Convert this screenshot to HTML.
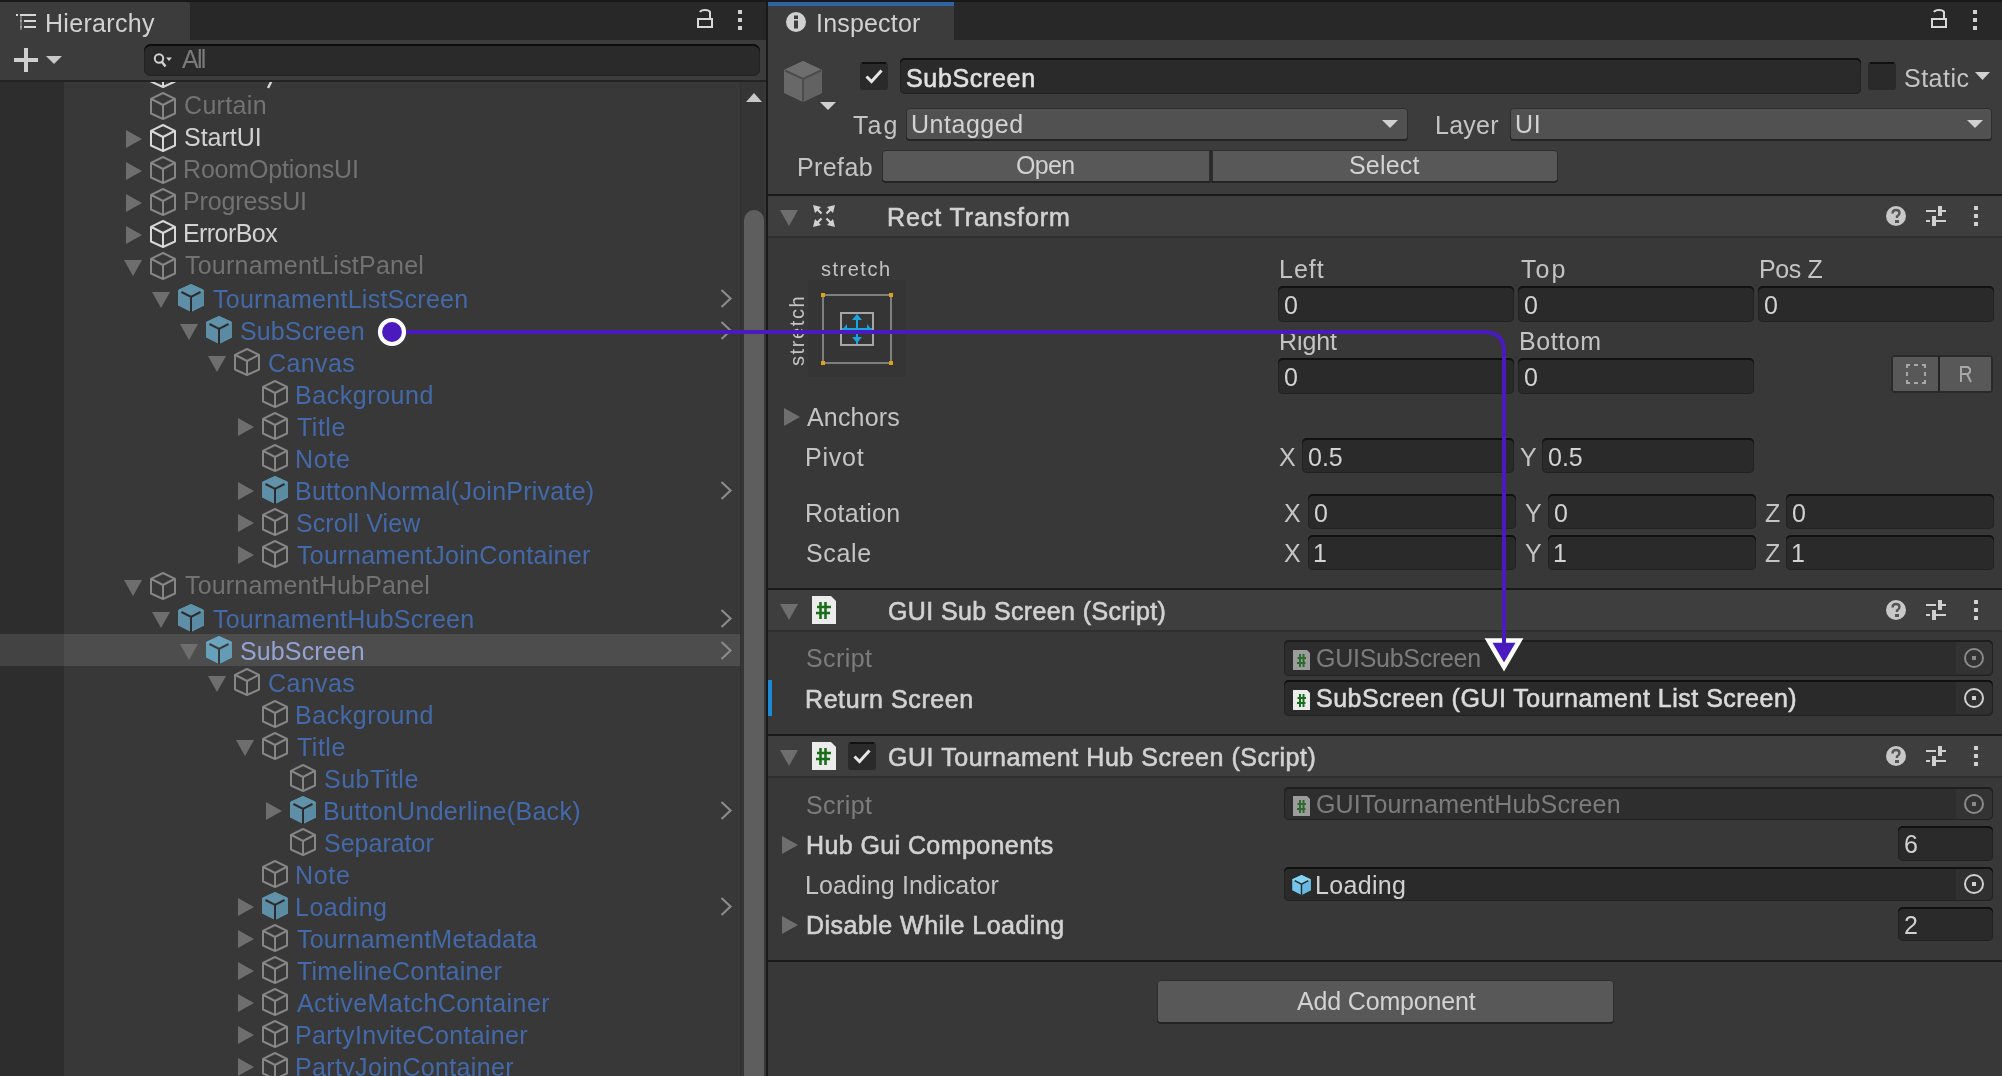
<!DOCTYPE html>
<html><head><meta charset="utf-8"><style>
html,body{margin:0;padding:0;width:2002px;height:1076px;overflow:hidden;background:#383838}
body *{position:absolute}
svg{overflow:visible}
svg *{position:static}
.t{white-space:pre;font-family:'Liberation Sans', sans-serif;will-change:transform}
</style></head><body>
<div style="left:0px;top:0px;width:2002px;height:1076px;background:#383838;"></div>
<div style="left:0px;top:0px;width:2002px;height:2px;background:#191919;"></div>
<div style="left:0px;top:2px;width:766px;height:38px;background:#282828;"></div>
<div style="left:0px;top:2px;width:190px;height:38px;background:#3c3c3c;border-top-right-radius:3px;"></div>
<svg style="left:14px;top:12px;" width="24" height="20" viewBox="0 0 24 20"><path d="M6 3 H22 M10 9 H22 M10 15 H22" stroke="#d8d8d8" stroke-width="2"/><rect x="2" y="2" width="2" height="2" fill="#d8d8d8"/><rect x="6" y="8" width="2" height="2" fill="#d8d8d8"/><rect x="6" y="14" width="2" height="2" fill="#d8d8d8"/><path d="M7 4 V18" stroke="#8a8a8a" stroke-width="1.5"/></svg>
<div class="t" style="left:45.00px;top:8.96px;font-size:25px;line-height:28.750px;color:#d2d2d2;font-weight:normal;letter-spacing:0.312px;">Hierarchy</div>
<svg style="left:697px;top:8px;" width="18" height="22" viewBox="0 0 18 22"><rect x="1" y="11" width="14" height="8" fill="none" stroke="#d8d8d8" stroke-width="2"/><path d="M3 4 Q4 2 8 2 Q12 2 13 4 V10" fill="none" stroke="#d8d8d8" stroke-width="2"/></svg>
<svg style="left:738px;top:10px;" width="4" height="20" viewBox="0 0 4 20"><rect x="0" y="0" width="4" height="4" fill="#d0d0d0"/><rect x="0" y="8" width="4" height="4" fill="#d0d0d0"/><rect x="0" y="16" width="4" height="4" fill="#d0d0d0"/></svg>
<div style="left:0px;top:40px;width:766px;height:40px;background:#3c3c3c;"></div>
<svg style="left:14px;top:48px;" width="24" height="24" viewBox="0 0 24 24"><path d="M12 0 V24 M0 12 H24" stroke="#d0d0d0" stroke-width="4"/></svg>
<svg style="left:46px;top:56px;" width="16" height="8" viewBox="0 0 16 8"><path d="M0 0 L16 0 L8.0 8 Z" fill="#c8c8c8"/></svg>
<div style="left:144px;top:44px;width:616px;height:32px;background:#2a2a2a;border-radius:7px;box-shadow:inset 0 2px 0 #0c0c0c, inset 0 0 0 1px #222;"></div>
<svg style="left:153px;top:53px;" width="20" height="16" viewBox="0 0 20 16"><circle cx="6" cy="5.5" r="4.2" fill="none" stroke="#d0d0d0" stroke-width="2"/><path d="M9 9 L12.5 13.5" stroke="#d0d0d0" stroke-width="2.5"/><path d="M13 4.5 H19 L16 8 Z" fill="#d0d0d0"/></svg>
<div class="t" style="left:182.00px;top:44.96px;font-size:25px;line-height:28.750px;color:#7a7a7a;font-weight:normal;letter-spacing:-1.700px;">All</div>
<div style="left:0px;top:80px;width:766px;height:2px;background:#232323;"></div>
<div style="left:0;top:82px;width:740px;height:994px;overflow:hidden;background:#383838">
<div style="left:0px;top:-24px;width:64px;height:32px;background:#2d2d2d;"></div>
<svg style="left:150px;top:-22px;" width="26" height="28" viewBox="0 0 26 28"><path d="M13 1 L25 6.8 V21.5 L13 27 L1 21.5 V6.8 Z M1.5 7 L13 13 L24.5 7 M13 13 V27" fill="none" stroke="#d8d8d8" stroke-width="2" stroke-linejoin="round"/></svg>
<svg style="left:266px;top:-2px;" width="8" height="8" viewBox="0 0 8 8"><path d="M6 0 L2 8" stroke="#d8d8d8" stroke-width="2.4"/></svg>
<div style="left:0px;top:8px;width:64px;height:32px;background:#2d2d2d;"></div>
<svg style="left:150px;top:10px;" width="26" height="28" viewBox="0 0 26 28"><path d="M13 1 L25 6.8 V21.5 L13 27 L1 21.5 V6.8 Z M1.5 7 L13 13 L24.5 7 M13 13 V27" fill="none" stroke="#868686" stroke-width="2" stroke-linejoin="round"/></svg>
<div class="t" style="left:184.00px;top:8.96px;font-size:25px;line-height:28.750px;color:#727272;font-weight:normal;letter-spacing:0.333px;">Curtain</div>
<div style="left:0px;top:40px;width:64px;height:32px;background:#2d2d2d;"></div>
<svg style="left:126px;top:48px;" width="16" height="18" viewBox="0 0 16 18"><path d="M0 0 L16 9 L0 18 Z" fill="#6e6e6e"/></svg>
<svg style="left:150px;top:42px;" width="26" height="28" viewBox="0 0 26 28"><path d="M13 1 L25 6.8 V21.5 L13 27 L1 21.5 V6.8 Z M1.5 7 L13 13 L24.5 7 M13 13 V27" fill="none" stroke="#d8d8d8" stroke-width="2" stroke-linejoin="round"/></svg>
<div class="t" style="left:184.00px;top:40.96px;font-size:25px;line-height:28.750px;color:#d2d2d2;font-weight:normal;letter-spacing:0.000px;">StartUI</div>
<div style="left:0px;top:72px;width:64px;height:32px;background:#2d2d2d;"></div>
<svg style="left:126px;top:80px;" width="16" height="18" viewBox="0 0 16 18"><path d="M0 0 L16 9 L0 18 Z" fill="#6e6e6e"/></svg>
<svg style="left:150px;top:74px;" width="26" height="28" viewBox="0 0 26 28"><path d="M13 1 L25 6.8 V21.5 L13 27 L1 21.5 V6.8 Z M1.5 7 L13 13 L24.5 7 M13 13 V27" fill="none" stroke="#868686" stroke-width="2" stroke-linejoin="round"/></svg>
<div class="t" style="left:183.00px;top:72.96px;font-size:25px;line-height:28.750px;color:#727272;font-weight:normal;letter-spacing:-0.167px;">RoomOptionsUI</div>
<div style="left:0px;top:104px;width:64px;height:32px;background:#2d2d2d;"></div>
<svg style="left:126px;top:112px;" width="16" height="18" viewBox="0 0 16 18"><path d="M0 0 L16 9 L0 18 Z" fill="#6e6e6e"/></svg>
<svg style="left:150px;top:106px;" width="26" height="28" viewBox="0 0 26 28"><path d="M13 1 L25 6.8 V21.5 L13 27 L1 21.5 V6.8 Z M1.5 7 L13 13 L24.5 7 M13 13 V27" fill="none" stroke="#868686" stroke-width="2" stroke-linejoin="round"/></svg>
<div class="t" style="left:183.00px;top:104.96px;font-size:25px;line-height:28.750px;color:#727272;font-weight:normal;letter-spacing:-0.111px;">ProgressUI</div>
<div style="left:0px;top:136px;width:64px;height:32px;background:#2d2d2d;"></div>
<svg style="left:126px;top:144px;" width="16" height="18" viewBox="0 0 16 18"><path d="M0 0 L16 9 L0 18 Z" fill="#6e6e6e"/></svg>
<svg style="left:150px;top:138px;" width="26" height="28" viewBox="0 0 26 28"><path d="M13 1 L25 6.8 V21.5 L13 27 L1 21.5 V6.8 Z M1.5 7 L13 13 L24.5 7 M13 13 V27" fill="none" stroke="#d8d8d8" stroke-width="2" stroke-linejoin="round"/></svg>
<div class="t" style="left:183.00px;top:136.96px;font-size:25px;line-height:28.750px;color:#d2d2d2;font-weight:normal;letter-spacing:-0.571px;">ErrorBox</div>
<div style="left:0px;top:168px;width:64px;height:32px;background:#2d2d2d;"></div>
<svg style="left:124px;top:178px;" width="18" height="16" viewBox="0 0 18 16"><path d="M0 0 L18 0 L9 16 Z" fill="#6e6e6e"/></svg>
<svg style="left:150px;top:170px;" width="26" height="28" viewBox="0 0 26 28"><path d="M13 1 L25 6.8 V21.5 L13 27 L1 21.5 V6.8 Z M1.5 7 L13 13 L24.5 7 M13 13 V27" fill="none" stroke="#868686" stroke-width="2" stroke-linejoin="round"/></svg>
<div class="t" style="left:185.00px;top:168.96px;font-size:25px;line-height:28.750px;color:#727272;font-weight:normal;letter-spacing:0.222px;">TournamentListPanel</div>
<div style="left:0px;top:200px;width:64px;height:32px;background:#2d2d2d;"></div>
<svg style="left:152px;top:210px;" width="18" height="16" viewBox="0 0 18 16"><path d="M0 0 L18 0 L9 16 Z" fill="#6e6e6e"/></svg>
<svg style="left:178px;top:202px" width="26" height="28" viewBox="0 0 26 28"><path d="M13 0 L25 5.5 Q26 6 26 7 V21.5 L13 28 L0 21.5 V7 Q0 6 1 5.5 Z" fill="#5e8fa6"/><path d="M13 0 L25 5.5 Q26 6 26 7 L13 13 L0 7 Q0 6 1 5.5 Z" fill="#6092aa"/><path d="M26 7 L13 13 V28 L26 21.5 Z" fill="#5b8ba2"/><path d="M3.5 8 L13 12.8 L22.5 8 M13 12.8 V28" fill="none" stroke="#2b2b2b" stroke-width="2"/></svg>
<div class="t" style="left:213.00px;top:202.96px;font-size:25px;line-height:28.750px;color:#4369a9;font-weight:normal;letter-spacing:0.263px;">TournamentListScreen</div>
<svg style="left:720px;top:207px;" width="12" height="19" viewBox="0 0 12 19"><path d="M1.5 1 L10.5 9.5 L1.5 18" fill="none" stroke="#8a8a8a" stroke-width="2.2"/></svg>
<div style="left:0px;top:232px;width:64px;height:32px;background:#2d2d2d;"></div>
<svg style="left:180px;top:242px;" width="18" height="16" viewBox="0 0 18 16"><path d="M0 0 L18 0 L9 16 Z" fill="#6e6e6e"/></svg>
<svg style="left:206px;top:234px" width="26" height="28" viewBox="0 0 26 28"><path d="M13 0 L25 5.5 Q26 6 26 7 V21.5 L13 28 L0 21.5 V7 Q0 6 1 5.5 Z" fill="#5e8fa6"/><path d="M13 0 L25 5.5 Q26 6 26 7 L13 13 L0 7 Q0 6 1 5.5 Z" fill="#6092aa"/><path d="M26 7 L13 13 V28 L26 21.5 Z" fill="#5b8ba2"/><path d="M3.5 8 L13 12.8 L22.5 8 M13 12.8 V28" fill="none" stroke="#2b2b2b" stroke-width="2"/></svg>
<div class="t" style="left:240.00px;top:234.96px;font-size:25px;line-height:28.750px;color:#4369a9;font-weight:normal;letter-spacing:0.125px;">SubScreen</div>
<svg style="left:720px;top:239px;" width="12" height="19" viewBox="0 0 12 19"><path d="M1.5 1 L10.5 9.5 L1.5 18" fill="none" stroke="#8a8a8a" stroke-width="2.2"/></svg>
<div style="left:0px;top:264px;width:64px;height:32px;background:#2d2d2d;"></div>
<svg style="left:208px;top:274px;" width="18" height="16" viewBox="0 0 18 16"><path d="M0 0 L18 0 L9 16 Z" fill="#6e6e6e"/></svg>
<svg style="left:234px;top:266px;" width="26" height="28" viewBox="0 0 26 28"><path d="M13 1 L25 6.8 V21.5 L13 27 L1 21.5 V6.8 Z M1.5 7 L13 13 L24.5 7 M13 13 V27" fill="none" stroke="#868686" stroke-width="2" stroke-linejoin="round"/></svg>
<div class="t" style="left:268.00px;top:266.96px;font-size:25px;line-height:28.750px;color:#4369a9;font-weight:normal;letter-spacing:0.400px;">Canvas</div>
<div style="left:0px;top:296px;width:64px;height:32px;background:#2d2d2d;"></div>
<svg style="left:262px;top:298px;" width="26" height="28" viewBox="0 0 26 28"><path d="M13 1 L25 6.8 V21.5 L13 27 L1 21.5 V6.8 Z M1.5 7 L13 13 L24.5 7 M13 13 V27" fill="none" stroke="#868686" stroke-width="2" stroke-linejoin="round"/></svg>
<div class="t" style="left:295.00px;top:298.96px;font-size:25px;line-height:28.750px;color:#4369a9;font-weight:normal;letter-spacing:0.556px;">Background</div>
<div style="left:0px;top:328px;width:64px;height:32px;background:#2d2d2d;"></div>
<svg style="left:238px;top:336px;" width="16" height="18" viewBox="0 0 16 18"><path d="M0 0 L16 9 L0 18 Z" fill="#6e6e6e"/></svg>
<svg style="left:262px;top:330px;" width="26" height="28" viewBox="0 0 26 28"><path d="M13 1 L25 6.8 V21.5 L13 27 L1 21.5 V6.8 Z M1.5 7 L13 13 L24.5 7 M13 13 V27" fill="none" stroke="#868686" stroke-width="2" stroke-linejoin="round"/></svg>
<div class="t" style="left:297.00px;top:330.96px;font-size:25px;line-height:28.750px;color:#4369a9;font-weight:normal;letter-spacing:0.500px;">Title</div>
<div style="left:0px;top:360px;width:64px;height:32px;background:#2d2d2d;"></div>
<svg style="left:262px;top:362px;" width="26" height="28" viewBox="0 0 26 28"><path d="M13 1 L25 6.8 V21.5 L13 27 L1 21.5 V6.8 Z M1.5 7 L13 13 L24.5 7 M13 13 V27" fill="none" stroke="#868686" stroke-width="2" stroke-linejoin="round"/></svg>
<div class="t" style="left:295.00px;top:362.96px;font-size:25px;line-height:28.750px;color:#4369a9;font-weight:normal;letter-spacing:0.667px;">Note</div>
<div style="left:0px;top:392px;width:64px;height:32px;background:#2d2d2d;"></div>
<svg style="left:238px;top:400px;" width="16" height="18" viewBox="0 0 16 18"><path d="M0 0 L16 9 L0 18 Z" fill="#6e6e6e"/></svg>
<svg style="left:262px;top:394px" width="26" height="28" viewBox="0 0 26 28"><path d="M13 0 L25 5.5 Q26 6 26 7 V21.5 L13 28 L0 21.5 V7 Q0 6 1 5.5 Z" fill="#5e8fa6"/><path d="M13 0 L25 5.5 Q26 6 26 7 L13 13 L0 7 Q0 6 1 5.5 Z" fill="#6092aa"/><path d="M26 7 L13 13 V28 L26 21.5 Z" fill="#5b8ba2"/><path d="M3.5 8 L13 12.8 L22.5 8 M13 12.8 V28" fill="none" stroke="#2b2b2b" stroke-width="2"/></svg>
<div class="t" style="left:295.00px;top:394.96px;font-size:25px;line-height:28.750px;color:#4369a9;font-weight:normal;letter-spacing:0.250px;">ButtonNormal(JoinPrivate)</div>
<svg style="left:720px;top:399px;" width="12" height="19" viewBox="0 0 12 19"><path d="M1.5 1 L10.5 9.5 L1.5 18" fill="none" stroke="#8a8a8a" stroke-width="2.2"/></svg>
<div style="left:0px;top:424px;width:64px;height:32px;background:#2d2d2d;"></div>
<svg style="left:238px;top:432px;" width="16" height="18" viewBox="0 0 16 18"><path d="M0 0 L16 9 L0 18 Z" fill="#6e6e6e"/></svg>
<svg style="left:262px;top:426px;" width="26" height="28" viewBox="0 0 26 28"><path d="M13 1 L25 6.8 V21.5 L13 27 L1 21.5 V6.8 Z M1.5 7 L13 13 L24.5 7 M13 13 V27" fill="none" stroke="#868686" stroke-width="2" stroke-linejoin="round"/></svg>
<div class="t" style="left:296.00px;top:426.96px;font-size:25px;line-height:28.750px;color:#4369a9;font-weight:normal;letter-spacing:0.100px;">Scroll View</div>
<div style="left:0px;top:456px;width:64px;height:32px;background:#2d2d2d;"></div>
<svg style="left:238px;top:464px;" width="16" height="18" viewBox="0 0 16 18"><path d="M0 0 L16 9 L0 18 Z" fill="#6e6e6e"/></svg>
<svg style="left:262px;top:458px;" width="26" height="28" viewBox="0 0 26 28"><path d="M13 1 L25 6.8 V21.5 L13 27 L1 21.5 V6.8 Z M1.5 7 L13 13 L24.5 7 M13 13 V27" fill="none" stroke="#868686" stroke-width="2" stroke-linejoin="round"/></svg>
<div class="t" style="left:297.00px;top:458.96px;font-size:25px;line-height:28.750px;color:#4369a9;font-weight:normal;letter-spacing:0.318px;">TournamentJoinContainer</div>
<div style="left:0px;top:488px;width:64px;height:32px;background:#2d2d2d;"></div>
<svg style="left:124px;top:498px;" width="18" height="16" viewBox="0 0 18 16"><path d="M0 0 L18 0 L9 16 Z" fill="#6e6e6e"/></svg>
<svg style="left:150px;top:490px;" width="26" height="28" viewBox="0 0 26 28"><path d="M13 1 L25 6.8 V21.5 L13 27 L1 21.5 V6.8 Z M1.5 7 L13 13 L24.5 7 M13 13 V27" fill="none" stroke="#868686" stroke-width="2" stroke-linejoin="round"/></svg>
<div class="t" style="left:185.00px;top:488.96px;font-size:25px;line-height:28.750px;color:#727272;font-weight:normal;letter-spacing:0.176px;">TournamentHubPanel</div>
<div style="left:0px;top:520px;width:64px;height:32px;background:#2d2d2d;"></div>
<svg style="left:152px;top:530px;" width="18" height="16" viewBox="0 0 18 16"><path d="M0 0 L18 0 L9 16 Z" fill="#6e6e6e"/></svg>
<svg style="left:178px;top:522px" width="26" height="28" viewBox="0 0 26 28"><path d="M13 0 L25 5.5 Q26 6 26 7 V21.5 L13 28 L0 21.5 V7 Q0 6 1 5.5 Z" fill="#5e8fa6"/><path d="M13 0 L25 5.5 Q26 6 26 7 L13 13 L0 7 Q0 6 1 5.5 Z" fill="#6092aa"/><path d="M26 7 L13 13 V28 L26 21.5 Z" fill="#5b8ba2"/><path d="M3.5 8 L13 12.8 L22.5 8 M13 12.8 V28" fill="none" stroke="#2b2b2b" stroke-width="2"/></svg>
<div class="t" style="left:213.00px;top:522.96px;font-size:25px;line-height:28.750px;color:#4369a9;font-weight:normal;letter-spacing:0.222px;">TournamentHubScreen</div>
<svg style="left:720px;top:527px;" width="12" height="19" viewBox="0 0 12 19"><path d="M1.5 1 L10.5 9.5 L1.5 18" fill="none" stroke="#8a8a8a" stroke-width="2.2"/></svg>
<div style="left:0px;top:552px;width:64px;height:32px;background:#434343;"></div>
<div style="left:64px;top:552px;width:676px;height:32px;background:#4d4d4d;"></div>
<svg style="left:180px;top:562px;" width="18" height="16" viewBox="0 0 18 16"><path d="M0 0 L18 0 L9 16 Z" fill="#6e6e6e"/></svg>
<svg style="left:206px;top:554px" width="26" height="28" viewBox="0 0 26 28"><path d="M13 0 L25 5.5 Q26 6 26 7 V21.5 L13 28 L0 21.5 V7 Q0 6 1 5.5 Z" fill="#67a0b9"/><path d="M13 0 L25 5.5 Q26 6 26 7 L13 13 L0 7 Q0 6 1 5.5 Z" fill="#6aa4bd"/><path d="M26 7 L13 13 V28 L26 21.5 Z" fill="#649cb5"/><path d="M3.5 8 L13 12.8 L22.5 8 M13 12.8 V28" fill="none" stroke="#3a3a3a" stroke-width="2"/></svg>
<div class="t" style="left:240.00px;top:554.96px;font-size:25px;line-height:28.750px;color:#95a2d4;font-weight:normal;letter-spacing:0.125px;">SubScreen</div>
<svg style="left:720px;top:559px;" width="12" height="19" viewBox="0 0 12 19"><path d="M1.5 1 L10.5 9.5 L1.5 18" fill="none" stroke="#8a8a8a" stroke-width="2.2"/></svg>
<div style="left:0px;top:584px;width:64px;height:32px;background:#2d2d2d;"></div>
<svg style="left:208px;top:594px;" width="18" height="16" viewBox="0 0 18 16"><path d="M0 0 L18 0 L9 16 Z" fill="#6e6e6e"/></svg>
<svg style="left:234px;top:586px;" width="26" height="28" viewBox="0 0 26 28"><path d="M13 1 L25 6.8 V21.5 L13 27 L1 21.5 V6.8 Z M1.5 7 L13 13 L24.5 7 M13 13 V27" fill="none" stroke="#868686" stroke-width="2" stroke-linejoin="round"/></svg>
<div class="t" style="left:268.00px;top:586.96px;font-size:25px;line-height:28.750px;color:#4369a9;font-weight:normal;letter-spacing:0.400px;">Canvas</div>
<div style="left:0px;top:616px;width:64px;height:32px;background:#2d2d2d;"></div>
<svg style="left:262px;top:618px;" width="26" height="28" viewBox="0 0 26 28"><path d="M13 1 L25 6.8 V21.5 L13 27 L1 21.5 V6.8 Z M1.5 7 L13 13 L24.5 7 M13 13 V27" fill="none" stroke="#868686" stroke-width="2" stroke-linejoin="round"/></svg>
<div class="t" style="left:295.00px;top:618.96px;font-size:25px;line-height:28.750px;color:#4369a9;font-weight:normal;letter-spacing:0.556px;">Background</div>
<div style="left:0px;top:648px;width:64px;height:32px;background:#2d2d2d;"></div>
<svg style="left:236px;top:658px;" width="18" height="16" viewBox="0 0 18 16"><path d="M0 0 L18 0 L9 16 Z" fill="#6e6e6e"/></svg>
<svg style="left:262px;top:650px;" width="26" height="28" viewBox="0 0 26 28"><path d="M13 1 L25 6.8 V21.5 L13 27 L1 21.5 V6.8 Z M1.5 7 L13 13 L24.5 7 M13 13 V27" fill="none" stroke="#868686" stroke-width="2" stroke-linejoin="round"/></svg>
<div class="t" style="left:297.00px;top:650.96px;font-size:25px;line-height:28.750px;color:#4369a9;font-weight:normal;letter-spacing:0.500px;">Title</div>
<div style="left:0px;top:680px;width:64px;height:32px;background:#2d2d2d;"></div>
<svg style="left:290px;top:682px;" width="26" height="28" viewBox="0 0 26 28"><path d="M13 1 L25 6.8 V21.5 L13 27 L1 21.5 V6.8 Z M1.5 7 L13 13 L24.5 7 M13 13 V27" fill="none" stroke="#868686" stroke-width="2" stroke-linejoin="round"/></svg>
<div class="t" style="left:324.00px;top:682.96px;font-size:25px;line-height:28.750px;color:#4369a9;font-weight:normal;letter-spacing:0.500px;">SubTitle</div>
<div style="left:0px;top:712px;width:64px;height:32px;background:#2d2d2d;"></div>
<svg style="left:266px;top:720px;" width="16" height="18" viewBox="0 0 16 18"><path d="M0 0 L16 9 L0 18 Z" fill="#6e6e6e"/></svg>
<svg style="left:290px;top:714px" width="26" height="28" viewBox="0 0 26 28"><path d="M13 0 L25 5.5 Q26 6 26 7 V21.5 L13 28 L0 21.5 V7 Q0 6 1 5.5 Z" fill="#5e8fa6"/><path d="M13 0 L25 5.5 Q26 6 26 7 L13 13 L0 7 Q0 6 1 5.5 Z" fill="#6092aa"/><path d="M26 7 L13 13 V28 L26 21.5 Z" fill="#5b8ba2"/><path d="M3.5 8 L13 12.8 L22.5 8 M13 12.8 V28" fill="none" stroke="#2b2b2b" stroke-width="2"/></svg>
<div class="t" style="left:323.00px;top:714.96px;font-size:25px;line-height:28.750px;color:#4369a9;font-weight:normal;letter-spacing:0.300px;">ButtonUnderline(Back)</div>
<svg style="left:720px;top:719px;" width="12" height="19" viewBox="0 0 12 19"><path d="M1.5 1 L10.5 9.5 L1.5 18" fill="none" stroke="#8a8a8a" stroke-width="2.2"/></svg>
<div style="left:0px;top:744px;width:64px;height:32px;background:#2d2d2d;"></div>
<svg style="left:290px;top:746px;" width="26" height="28" viewBox="0 0 26 28"><path d="M13 1 L25 6.8 V21.5 L13 27 L1 21.5 V6.8 Z M1.5 7 L13 13 L24.5 7 M13 13 V27" fill="none" stroke="#868686" stroke-width="2" stroke-linejoin="round"/></svg>
<div class="t" style="left:324.00px;top:746.96px;font-size:25px;line-height:28.750px;color:#4369a9;font-weight:normal;letter-spacing:0.000px;">Separator</div>
<div style="left:0px;top:776px;width:64px;height:32px;background:#2d2d2d;"></div>
<svg style="left:262px;top:778px;" width="26" height="28" viewBox="0 0 26 28"><path d="M13 1 L25 6.8 V21.5 L13 27 L1 21.5 V6.8 Z M1.5 7 L13 13 L24.5 7 M13 13 V27" fill="none" stroke="#868686" stroke-width="2" stroke-linejoin="round"/></svg>
<div class="t" style="left:295.00px;top:778.96px;font-size:25px;line-height:28.750px;color:#4369a9;font-weight:normal;letter-spacing:0.667px;">Note</div>
<div style="left:0px;top:808px;width:64px;height:32px;background:#2d2d2d;"></div>
<svg style="left:238px;top:816px;" width="16" height="18" viewBox="0 0 16 18"><path d="M0 0 L16 9 L0 18 Z" fill="#6e6e6e"/></svg>
<svg style="left:262px;top:810px" width="26" height="28" viewBox="0 0 26 28"><path d="M13 0 L25 5.5 Q26 6 26 7 V21.5 L13 28 L0 21.5 V7 Q0 6 1 5.5 Z" fill="#5e8fa6"/><path d="M13 0 L25 5.5 Q26 6 26 7 L13 13 L0 7 Q0 6 1 5.5 Z" fill="#6092aa"/><path d="M26 7 L13 13 V28 L26 21.5 Z" fill="#5b8ba2"/><path d="M3.5 8 L13 12.8 L22.5 8 M13 12.8 V28" fill="none" stroke="#2b2b2b" stroke-width="2"/></svg>
<div class="t" style="left:295.00px;top:810.96px;font-size:25px;line-height:28.750px;color:#4369a9;font-weight:normal;letter-spacing:0.500px;">Loading</div>
<svg style="left:720px;top:815px;" width="12" height="19" viewBox="0 0 12 19"><path d="M1.5 1 L10.5 9.5 L1.5 18" fill="none" stroke="#8a8a8a" stroke-width="2.2"/></svg>
<div style="left:0px;top:840px;width:64px;height:32px;background:#2d2d2d;"></div>
<svg style="left:238px;top:848px;" width="16" height="18" viewBox="0 0 16 18"><path d="M0 0 L16 9 L0 18 Z" fill="#6e6e6e"/></svg>
<svg style="left:262px;top:842px;" width="26" height="28" viewBox="0 0 26 28"><path d="M13 1 L25 6.8 V21.5 L13 27 L1 21.5 V6.8 Z M1.5 7 L13 13 L24.5 7 M13 13 V27" fill="none" stroke="#868686" stroke-width="2" stroke-linejoin="round"/></svg>
<div class="t" style="left:297.00px;top:842.96px;font-size:25px;line-height:28.750px;color:#4369a9;font-weight:normal;letter-spacing:0.235px;">TournamentMetadata</div>
<div style="left:0px;top:872px;width:64px;height:32px;background:#2d2d2d;"></div>
<svg style="left:238px;top:880px;" width="16" height="18" viewBox="0 0 16 18"><path d="M0 0 L16 9 L0 18 Z" fill="#6e6e6e"/></svg>
<svg style="left:262px;top:874px;" width="26" height="28" viewBox="0 0 26 28"><path d="M13 1 L25 6.8 V21.5 L13 27 L1 21.5 V6.8 Z M1.5 7 L13 13 L24.5 7 M13 13 V27" fill="none" stroke="#868686" stroke-width="2" stroke-linejoin="round"/></svg>
<div class="t" style="left:297.00px;top:874.96px;font-size:25px;line-height:28.750px;color:#4369a9;font-weight:normal;letter-spacing:0.188px;">TimelineContainer</div>
<div style="left:0px;top:904px;width:64px;height:32px;background:#2d2d2d;"></div>
<svg style="left:238px;top:912px;" width="16" height="18" viewBox="0 0 16 18"><path d="M0 0 L16 9 L0 18 Z" fill="#6e6e6e"/></svg>
<svg style="left:262px;top:906px;" width="26" height="28" viewBox="0 0 26 28"><path d="M13 1 L25 6.8 V21.5 L13 27 L1 21.5 V6.8 Z M1.5 7 L13 13 L24.5 7 M13 13 V27" fill="none" stroke="#868686" stroke-width="2" stroke-linejoin="round"/></svg>
<div class="t" style="left:297.00px;top:906.96px;font-size:25px;line-height:28.750px;color:#4369a9;font-weight:normal;letter-spacing:0.421px;">ActiveMatchContainer</div>
<div style="left:0px;top:936px;width:64px;height:32px;background:#2d2d2d;"></div>
<svg style="left:238px;top:944px;" width="16" height="18" viewBox="0 0 16 18"><path d="M0 0 L16 9 L0 18 Z" fill="#6e6e6e"/></svg>
<svg style="left:262px;top:938px;" width="26" height="28" viewBox="0 0 26 28"><path d="M13 1 L25 6.8 V21.5 L13 27 L1 21.5 V6.8 Z M1.5 7 L13 13 L24.5 7 M13 13 V27" fill="none" stroke="#868686" stroke-width="2" stroke-linejoin="round"/></svg>
<div class="t" style="left:295.00px;top:938.96px;font-size:25px;line-height:28.750px;color:#4369a9;font-weight:normal;letter-spacing:0.316px;">PartyInviteContainer</div>
<div style="left:0px;top:968px;width:64px;height:32px;background:#2d2d2d;"></div>
<svg style="left:238px;top:976px;" width="16" height="18" viewBox="0 0 16 18"><path d="M0 0 L16 9 L0 18 Z" fill="#6e6e6e"/></svg>
<svg style="left:262px;top:970px;" width="26" height="28" viewBox="0 0 26 28"><path d="M13 1 L25 6.8 V21.5 L13 27 L1 21.5 V6.8 Z M1.5 7 L13 13 L24.5 7 M13 13 V27" fill="none" stroke="#868686" stroke-width="2" stroke-linejoin="round"/></svg>
<div class="t" style="left:295.00px;top:970.96px;font-size:25px;line-height:28.750px;color:#4369a9;font-weight:normal;letter-spacing:0.353px;">PartyJoinContainer</div>
</div>
<div style="left:740px;top:82px;width:1px;height:994px;background:#303030;"></div>
<div style="left:741px;top:82px;width:23px;height:994px;background:#353535;"></div>
<svg style="left:746px;top:93px;" width="16" height="9" viewBox="0 0 16 9"><path d="M0 9 L16 9 L8 0 Z" fill="#c8c8c8"/></svg>
<div style="left:744px;top:210px;width:20px;height:900px;background:#5e5e5e;border-radius:10px;"></div>
<div style="left:766px;top:0px;width:2px;height:1076px;background:#191919;"></div>
<div style="left:768px;top:2px;width:1234px;height:38px;background:#282828;"></div>
<div style="left:768px;top:2px;width:186px;height:38px;background:#3c3c3c;"></div>
<div style="left:768px;top:2px;width:186px;height:4px;background:#2e65a0;"></div>
<svg style="left:786px;top:12px;" width="20" height="20" viewBox="0 0 20 20"><circle cx="10" cy="10" r="10" fill="#d0d0d0"/><rect x="8" y="8.5" width="4" height="8" fill="#3c3c3c"/><rect x="8" y="3.5" width="4" height="3.5" fill="#3c3c3c"/></svg>
<div class="t" style="left:816.00px;top:8.96px;font-size:25px;line-height:28.750px;color:#d2d2d2;font-weight:normal;letter-spacing:0.188px;">Inspector</div>
<svg style="left:1931px;top:8px;" width="18" height="22" viewBox="0 0 18 22"><rect x="1" y="11" width="14" height="8" fill="none" stroke="#d8d8d8" stroke-width="2"/><path d="M3 4 Q4 2 8 2 Q12 2 13 4 V10" fill="none" stroke="#d8d8d8" stroke-width="2"/></svg>
<svg style="left:1973px;top:10px;" width="4" height="20" viewBox="0 0 4 20"><rect x="0" y="0" width="4" height="4" fill="#d0d0d0"/><rect x="0" y="8" width="4" height="4" fill="#d0d0d0"/><rect x="0" y="16" width="4" height="4" fill="#d0d0d0"/></svg>
<div style="left:768px;top:40px;width:1234px;height:154px;background:#3c3c3c;"></div>
<svg style="left:784px;top:61px;" width="38" height="41" viewBox="0 0 38 41"><path d="M19 0 L38 9 V32 L19 41 L0 32 V9 Z" fill="#686868"/><path d="M19 0 L38 9 L19 18 L0 9 Z" fill="#6e6e6e"/><path d="M38 9 L19 18 V41 L38 32 Z" fill="#626262"/><path d="M1 9.5 L19 18 L37 9.5 M19 18 V41" fill="none" stroke="#4c4c4c" stroke-width="2"/></svg>
<svg style="left:820px;top:102px;" width="16" height="8" viewBox="0 0 16 8"><path d="M0 0 L16 0 L8 8 Z" fill="#d0d0d0"/></svg>
<svg style="left:860px;top:62px;" width="28" height="28" viewBox="0 0 28 28"><rect x="0" y="0" width="28" height="28" rx="3" fill="#2a2a2a"/><rect x="2" y="0" width="24" height="2" fill="#101010"/><path d="M6.5 14.5 L11.5 19.5 L21.5 8.5" fill="none" stroke="#e6e6e6" stroke-width="3"/></svg>
<div style="left:900px;top:58px;width:961px;height:36px;background:#2a2a2a;border-radius:5px;box-shadow:inset 0 2px 0 #111111, inset 0 0 0 1px #222222;"></div>
<div class="t" style="left:906.00px;top:63.96px;font-size:25px;line-height:28.750px;color:#e0e0e0;font-weight:normal;letter-spacing:0.675px;-webkit-text-stroke:0.6px #e0e0e0;">SubScreen</div>
<svg style="left:1868px;top:62px;" width="28" height="28" viewBox="0 0 28 28"><rect x="0" y="0" width="28" height="28" rx="3" fill="#2a2a2a"/><rect x="2" y="0" width="24" height="2" fill="#101010"/></svg>
<div class="t" style="left:1904.00px;top:63.96px;font-size:25px;line-height:28.750px;color:#c4c4c4;font-weight:normal;letter-spacing:0.500px;">Static</div>
<svg style="left:1975px;top:72px;" width="15" height="8" viewBox="0 0 15 8"><path d="M0 0 L15 0 L7.5 8 Z" fill="#d0d0d0"/></svg>
<div class="t" style="left:853.00px;top:110.96px;font-size:25px;line-height:28.750px;color:#c4c4c4;font-weight:normal;letter-spacing:2.000px;">Tag</div>
<div style="left:906px;top:108px;width:502px;height:33px;background:#515151;border-radius:4px;box-shadow:inset 0 -2px 0 #242424, inset 0 0 0 1px #2e2e2e;"></div>
<div class="t" style="left:911.00px;top:109.96px;font-size:25px;line-height:28.750px;color:#d2d2d2;font-weight:normal;letter-spacing:0.529px;">Untagged</div>
<svg style="left:1382px;top:120px;" width="16" height="8" viewBox="0 0 16 8"><path d="M0 0 L16 0 L8 8 Z" fill="#d0d0d0"/></svg>
<div class="t" style="left:1435.00px;top:110.96px;font-size:25px;line-height:28.750px;color:#c4c4c4;font-weight:normal;letter-spacing:0.250px;">Layer</div>
<div style="left:1510px;top:108px;width:482px;height:33px;background:#515151;border-radius:4px;box-shadow:inset 0 -2px 0 #242424, inset 0 0 0 1px #2e2e2e;"></div>
<div class="t" style="left:1515.00px;top:109.96px;font-size:25px;line-height:28.750px;color:#d2d2d2;font-weight:normal;letter-spacing:0.600px;">UI</div>
<svg style="left:1967px;top:120px;" width="16" height="8" viewBox="0 0 16 8"><path d="M0 0 L16 0 L8 8 Z" fill="#d0d0d0"/></svg>
<div class="t" style="left:797.00px;top:152.96px;font-size:25px;line-height:28.750px;color:#c4c4c4;font-weight:normal;letter-spacing:0.400px;">Prefab</div>
<div style="left:882px;top:150px;width:328px;height:33px;background:#585858;border-radius:4px 0 0 4px;box-shadow:inset 0 -2px 0 #242424, inset 0 0 0 1px #2e2e2e;"></div>
<div style="left:1212px;top:150px;width:346px;height:33px;background:#585858;border-radius:0 4px 4px 0;box-shadow:inset 0 -2px 0 #242424, inset 0 0 0 1px #2e2e2e;"></div>
<div style="left:1210px;top:150px;width:2px;height:33px;background:#2a2a2a;"></div>
<div class="t" style="left:1016.00px;top:150.96px;font-size:25px;line-height:28.750px;color:#d2d2d2;font-weight:normal;letter-spacing:-0.667px;">Open</div>
<div class="t" style="left:1349.00px;top:150.96px;font-size:25px;line-height:28.750px;color:#d2d2d2;font-weight:normal;letter-spacing:0.200px;">Select</div>
<div style="left:768px;top:194px;width:1234px;height:2px;background:#1a1a1a;"></div>
<div style="left:768px;top:196px;width:1234px;height:40px;background:#3e3e3e;"></div>
<div style="left:768px;top:236px;width:1234px;height:2px;background:#2f2f2f;"></div>
<svg style="left:780px;top:210px;" width="18" height="16" viewBox="0 0 18 16"><path d="M0 0 L18 0 L9 16 Z" fill="#6e6e6e"/></svg>
<svg style="left:812px;top:204px;" width="24" height="24" viewBox="0 0 24 24"><path d="M1 1 L9 3 L3 9 Z M23 1 L15 3 L21 9 Z M1 23 L9 21 L3 15 Z M23 23 L15 21 L21 15 Z" fill="#d0d0d0"/><path d="M4 4 L9.5 9.5 M20 4 L14.5 9.5 M4 20 L9.5 14.5 M20 20 L14.5 14.5" stroke="#d0d0d0" stroke-width="2.4"/></svg>
<div class="t" style="left:887.00px;top:202.96px;font-size:25px;line-height:28.750px;color:#d2d2d2;font-weight:normal;letter-spacing:0.915px;-webkit-text-stroke:0.6px #d2d2d2;">Rect Transform</div>
<svg style="left:1886px;top:206px;" width="20" height="20" viewBox="0 0 20 20"><circle cx="10" cy="10" r="10" fill="#c8c8c8"/><path d="M6.5 7.5 Q6.5 4 10 4 Q13.5 4 13.5 7 Q13.5 9 11 10.5 V12" fill="none" stroke="#555" stroke-width="2.4"/><rect x="9" y="14" width="4" height="3" fill="#555"/></svg>
<svg style="left:1926px;top:206px;" width="20" height="21" viewBox="0 0 20 21"><path d="M0 5 H10 M16 5 H20 M0 15 H4 M10 15 H20" stroke="#d0d0d0" stroke-width="2"/><rect x="12" y="0" width="4" height="10" fill="#d0d0d0"/><rect x="6" y="10" width="4" height="10" fill="#d0d0d0"/></svg>
<svg style="left:1974px;top:206px;" width="4" height="20" viewBox="0 0 4 20"><rect x="0" y="0" width="4" height="4" fill="#d0d0d0"/><rect x="0" y="8" width="4" height="4" fill="#d0d0d0"/><rect x="0" y="16" width="4" height="4" fill="#d0d0d0"/></svg>
<div class="t" style="left:821.00px;top:257.57px;font-size:20px;line-height:23.000px;color:#c4c4c4;font-weight:normal;letter-spacing:1.500px;">stretch</div>
<div style="left:808px;top:280px;width:98px;height:97px;background:#353535;"></div>
<div style="left:822px;top:294px;width:66px;height:66px;border:2px solid #7f7f7f;"></div>
<div style="left:821px;top:293px;width:4px;height:4px;background:#e0a010;"></div>
<div style="left:889px;top:293px;width:4px;height:4px;background:#e0a010;"></div>
<div style="left:821px;top:361px;width:4px;height:4px;background:#e0a010;"></div>
<div style="left:889px;top:361px;width:4px;height:4px;background:#e0a010;"></div>
<div style="left:840px;top:312px;width:30px;height:30px;border:2px solid #a6a6a6;"></div>
<svg style="left:840px;top:312px;" width="34" height="34" viewBox="0 0 34 34"><path d="M17 3 V32 M2 17 H32" stroke="#1aa4e0" stroke-width="2"/><path d="M12 8 L17 2 L22 8 Z M12 25 L17 31 L22 25 Z M3 17 L7 12 L7 17 Z M31 17 L27 12 L27 17 Z" fill="#1aa4e0"/></svg>
<div class="t" style="left:762px;top:316px;width:70px;height:30px;font-size:20px;line-height:30px;color:#c4c4c4;letter-spacing:1.6px;transform:rotate(-90deg);transform-origin:35px 15px;text-align:center">stretch</div>
<div class="t" style="left:1279.00px;top:254.96px;font-size:25px;line-height:28.750px;color:#c4c4c4;font-weight:normal;letter-spacing:1.000px;">Left</div>
<div class="t" style="left:1521.00px;top:254.96px;font-size:25px;line-height:28.750px;color:#c4c4c4;font-weight:normal;letter-spacing:2.000px;">Top</div>
<div class="t" style="left:1759.00px;top:254.96px;font-size:25px;line-height:28.750px;color:#c4c4c4;font-weight:normal;letter-spacing:-0.375px;">Pos Z</div>
<div style="left:1278px;top:286px;width:236px;height:36px;background:#2a2a2a;border-radius:5px;box-shadow:inset 0 2px 0 #111111, inset 0 0 0 1px #222222;"></div>
<div class="t" style="left:1284.00px;top:290.96px;font-size:25px;line-height:28.750px;color:#d2d2d2;font-weight:normal;letter-spacing:0.000px;">0</div>
<div style="left:1518px;top:286px;width:236px;height:36px;background:#2a2a2a;border-radius:5px;box-shadow:inset 0 2px 0 #111111, inset 0 0 0 1px #222222;"></div>
<div class="t" style="left:1524.00px;top:290.96px;font-size:25px;line-height:28.750px;color:#d2d2d2;font-weight:normal;letter-spacing:0.000px;">0</div>
<div style="left:1758px;top:286px;width:236px;height:36px;background:#2a2a2a;border-radius:5px;box-shadow:inset 0 2px 0 #111111, inset 0 0 0 1px #222222;"></div>
<div class="t" style="left:1764.00px;top:290.96px;font-size:25px;line-height:28.750px;color:#d2d2d2;font-weight:normal;letter-spacing:0.000px;">0</div>
<div class="t" style="left:1279.00px;top:326.96px;font-size:25px;line-height:28.750px;color:#c4c4c4;font-weight:normal;letter-spacing:-0.075px;">Right</div>
<div class="t" style="left:1519.00px;top:326.96px;font-size:25px;line-height:28.750px;color:#c4c4c4;font-weight:normal;letter-spacing:0.600px;">Bottom</div>
<div style="left:1278px;top:358px;width:236px;height:36px;background:#2a2a2a;border-radius:5px;box-shadow:inset 0 2px 0 #111111, inset 0 0 0 1px #222222;"></div>
<div class="t" style="left:1284.00px;top:362.96px;font-size:25px;line-height:28.750px;color:#d2d2d2;font-weight:normal;letter-spacing:0.000px;">0</div>
<div style="left:1518px;top:358px;width:236px;height:36px;background:#2a2a2a;border-radius:5px;box-shadow:inset 0 2px 0 #111111, inset 0 0 0 1px #222222;"></div>
<div class="t" style="left:1524.00px;top:362.96px;font-size:25px;line-height:28.750px;color:#d2d2d2;font-weight:normal;letter-spacing:0.000px;">0</div>
<div style="left:1891px;top:355px;width:102px;height:38px;background:#585858;border-radius:3px;box-shadow:inset 0 0 0 2px #2a2a2a;"></div>
<div style="left:1938px;top:355px;width:2px;height:38px;background:#242424;"></div>
<svg style="left:1906px;top:364px;" width="20" height="20" viewBox="0 0 20 20"><path fill="#a8a8a8" d="M0 0 H4 V2 H2 V4 H0 Z M8 0 H12 V2 H8 Z M16 0 H20 V4 H18 V2 H16 Z M0 8 H2 V12 H0 Z M18 8 H20 V12 H18 Z M0 16 H2 V18 H4 V20 H0 Z M8 18 H12 V20 H8 Z M18 16 H20 V20 H16 V18 H18 Z"/></svg>
<svg style="left:1960px;top:366px;" width="12" height="16" viewBox="0 0 12 16"><path d="M1 16 V1 H8 L10 3 V6 L8 8 H1 M7 8 L11 16" fill="none" stroke="#a8a8a8" stroke-width="2"/></svg>
<svg style="left:784px;top:408px;" width="16" height="18" viewBox="0 0 16 18"><path d="M0 0 L16 9 L0 18 Z" fill="#6e6e6e"/></svg>
<div class="t" style="left:807.00px;top:402.96px;font-size:25px;line-height:28.750px;color:#c4c4c4;font-weight:normal;letter-spacing:0.167px;">Anchors</div>
<div class="t" style="left:805.00px;top:442.96px;font-size:25px;line-height:28.750px;color:#c4c4c4;font-weight:normal;letter-spacing:0.750px;">Pivot</div>
<div class="t" style="left:1279.00px;top:442.96px;font-size:25px;line-height:28.750px;color:#c4c4c4;font-weight:normal;letter-spacing:0.000px;">X</div>
<div style="left:1302px;top:438px;width:212px;height:35px;background:#2a2a2a;border-radius:5px;box-shadow:inset 0 2px 0 #111111, inset 0 0 0 1px #222222;"></div>
<div class="t" style="left:1308.00px;top:442.96px;font-size:25px;line-height:28.750px;color:#d2d2d2;font-weight:normal;letter-spacing:0.000px;">0.5</div>
<div class="t" style="left:1520.00px;top:442.96px;font-size:25px;line-height:28.750px;color:#c4c4c4;font-weight:normal;letter-spacing:0.000px;">Y</div>
<div style="left:1542px;top:438px;width:212px;height:35px;background:#2a2a2a;border-radius:5px;box-shadow:inset 0 2px 0 #111111, inset 0 0 0 1px #222222;"></div>
<div class="t" style="left:1548.00px;top:442.96px;font-size:25px;line-height:28.750px;color:#d2d2d2;font-weight:normal;letter-spacing:0.000px;">0.5</div>
<div class="t" style="left:805.00px;top:498.96px;font-size:25px;line-height:28.750px;color:#c4c4c4;font-weight:normal;letter-spacing:0.286px;">Rotation</div>
<div class="t" style="left:1284.00px;top:498.96px;font-size:25px;line-height:28.750px;color:#c4c4c4;font-weight:normal;letter-spacing:0.000px;">X</div>
<div style="left:1308px;top:494px;width:208px;height:35px;background:#2a2a2a;border-radius:5px;box-shadow:inset 0 2px 0 #111111, inset 0 0 0 1px #222222;"></div>
<div class="t" style="left:1314.00px;top:498.96px;font-size:25px;line-height:28.750px;color:#d2d2d2;font-weight:normal;letter-spacing:0.000px;">0</div>
<div class="t" style="left:1525.00px;top:498.96px;font-size:25px;line-height:28.750px;color:#c4c4c4;font-weight:normal;letter-spacing:0.000px;">Y</div>
<div style="left:1548px;top:494px;width:208px;height:35px;background:#2a2a2a;border-radius:5px;box-shadow:inset 0 2px 0 #111111, inset 0 0 0 1px #222222;"></div>
<div class="t" style="left:1554.00px;top:498.96px;font-size:25px;line-height:28.750px;color:#d2d2d2;font-weight:normal;letter-spacing:0.000px;">0</div>
<div class="t" style="left:1765.00px;top:498.96px;font-size:25px;line-height:28.750px;color:#c4c4c4;font-weight:normal;letter-spacing:0.000px;">Z</div>
<div style="left:1786px;top:494px;width:208px;height:35px;background:#2a2a2a;border-radius:5px;box-shadow:inset 0 2px 0 #111111, inset 0 0 0 1px #222222;"></div>
<div class="t" style="left:1792.00px;top:498.96px;font-size:25px;line-height:28.750px;color:#d2d2d2;font-weight:normal;letter-spacing:0.000px;">0</div>
<div class="t" style="left:806.00px;top:538.96px;font-size:25px;line-height:28.750px;color:#c4c4c4;font-weight:normal;letter-spacing:0.625px;">Scale</div>
<div class="t" style="left:1284.00px;top:538.96px;font-size:25px;line-height:28.750px;color:#c4c4c4;font-weight:normal;letter-spacing:0.000px;">X</div>
<div style="left:1308px;top:535px;width:208px;height:35px;background:#2a2a2a;border-radius:5px;box-shadow:inset 0 2px 0 #111111, inset 0 0 0 1px #222222;"></div>
<div class="t" style="left:1313.00px;top:538.96px;font-size:25px;line-height:28.750px;color:#d2d2d2;font-weight:normal;letter-spacing:0.000px;">1</div>
<div class="t" style="left:1525.00px;top:538.96px;font-size:25px;line-height:28.750px;color:#c4c4c4;font-weight:normal;letter-spacing:0.000px;">Y</div>
<div style="left:1548px;top:535px;width:208px;height:35px;background:#2a2a2a;border-radius:5px;box-shadow:inset 0 2px 0 #111111, inset 0 0 0 1px #222222;"></div>
<div class="t" style="left:1553.00px;top:538.96px;font-size:25px;line-height:28.750px;color:#d2d2d2;font-weight:normal;letter-spacing:0.000px;">1</div>
<div class="t" style="left:1765.00px;top:538.96px;font-size:25px;line-height:28.750px;color:#c4c4c4;font-weight:normal;letter-spacing:0.000px;">Z</div>
<div style="left:1786px;top:535px;width:208px;height:35px;background:#2a2a2a;border-radius:5px;box-shadow:inset 0 2px 0 #111111, inset 0 0 0 1px #222222;"></div>
<div class="t" style="left:1791.00px;top:538.96px;font-size:25px;line-height:28.750px;color:#d2d2d2;font-weight:normal;letter-spacing:0.000px;">1</div>
<div style="left:768px;top:588px;width:1234px;height:2px;background:#1a1a1a;"></div>
<div style="left:768px;top:590px;width:1234px;height:40px;background:#3e3e3e;"></div>
<div style="left:768px;top:630px;width:1234px;height:2px;background:#2f2f2f;"></div>
<svg style="left:780px;top:604px;" width="18" height="16" viewBox="0 0 18 16"><path d="M0 0 L18 0 L9 16 Z" fill="#6e6e6e"/></svg>
<svg style="left:812px;top:596px;" width="24" height="28" viewBox="0 0 24 28"><path d="M0 0 H19 L24 5 V28 H0 Z" fill="#ececec"/><path d="M8.5 6 V23 M13.5 6 V23" stroke="#1a6e1a" stroke-width="2.6"/><path d="M5 11 H19 M4 17 H18" stroke="#1a6e1a" stroke-width="2.6"/></svg>
<div class="t" style="left:888.00px;top:596.96px;font-size:25px;line-height:28.750px;color:#d2d2d2;font-weight:normal;letter-spacing:0.382px;-webkit-text-stroke:0.6px #d2d2d2;">GUI Sub Screen (Script)</div>
<svg style="left:1886px;top:600px;" width="20" height="20" viewBox="0 0 20 20"><circle cx="10" cy="10" r="10" fill="#c8c8c8"/><path d="M6.5 7.5 Q6.5 4 10 4 Q13.5 4 13.5 7 Q13.5 9 11 10.5 V12" fill="none" stroke="#555" stroke-width="2.4"/><rect x="9" y="14" width="4" height="3" fill="#555"/></svg>
<svg style="left:1926px;top:600px;" width="20" height="21" viewBox="0 0 20 21"><path d="M0 5 H10 M16 5 H20 M0 15 H4 M10 15 H20" stroke="#d0d0d0" stroke-width="2"/><rect x="12" y="0" width="4" height="10" fill="#d0d0d0"/><rect x="6" y="10" width="4" height="10" fill="#d0d0d0"/></svg>
<svg style="left:1974px;top:600px;" width="4" height="20" viewBox="0 0 4 20"><rect x="0" y="0" width="4" height="4" fill="#d0d0d0"/><rect x="0" y="8" width="4" height="4" fill="#d0d0d0"/><rect x="0" y="16" width="4" height="4" fill="#d0d0d0"/></svg>
<div class="t" style="left:806.00px;top:643.96px;font-size:25px;line-height:28.750px;color:#7c7c7c;font-weight:normal;letter-spacing:0.400px;">Script</div>
<div style="left:1284px;top:640px;width:709px;height:36px;background:#2d2d2d;border-radius:5px;box-shadow:inset 0 2px 0 #1e1e1e, inset 0 0 0 1px #222222;"></div>
<div style="left:1956px;top:642px;width:36px;height:32px;background:#333333;border-radius:0 5px 5px 0;"></div>
<svg style="left:1293px;top:650px;" width="17" height="20" viewBox="0 0 17 20"><path d="M0 0 H14 L17 3 V20 H0 Z" fill="#9c9c9c"/><path d="M7 4 V17 M10.5 4 V17" stroke="#2d6a2d" stroke-width="2"/><path d="M4.5 8 H13 M4 13 H12.5" stroke="#2d6a2d" stroke-width="2"/></svg>
<div class="t" style="left:1316.00px;top:643.96px;font-size:25px;line-height:28.750px;color:#7c7c7c;font-weight:normal;letter-spacing:-0.273px;">GUISubScreen</div>
<svg style="left:1964px;top:648px;" width="20" height="20" viewBox="0 0 20 20"><circle cx="10" cy="10" r="9" fill="none" stroke="#8a8a8a" stroke-width="2"/><rect x="8" y="8" width="4" height="4" fill="#8a8a8a"/></svg>
<div style="left:768px;top:680px;width:4px;height:36px;background:#1d8ad8;"></div>
<div class="t" style="left:805.00px;top:684.96px;font-size:25px;line-height:28.750px;color:#d2d2d2;font-weight:normal;letter-spacing:0.583px;-webkit-text-stroke:0.6px #d2d2d2;">Return Screen</div>
<div style="left:1284px;top:680px;width:709px;height:36px;background:#2a2a2a;border-radius:5px;box-shadow:inset 0 2px 0 #111111, inset 0 0 0 1px #222222;"></div>
<div style="left:1956px;top:682px;width:36px;height:32px;background:#303030;border-radius:0 5px 5px 0;"></div>
<svg style="left:1293px;top:690px;" width="17" height="20" viewBox="0 0 17 20"><path d="M0 0 H14 L17 3 V20 H0 Z" fill="#ececec"/><path d="M7 4 V17 M10.5 4 V17" stroke="#1a6e1a" stroke-width="2"/><path d="M4.5 8 H13 M4 13 H12.5" stroke="#1a6e1a" stroke-width="2"/></svg>
<div class="t" style="left:1316.00px;top:683.96px;font-size:25px;line-height:28.750px;color:#dadada;font-weight:normal;letter-spacing:0.497px;-webkit-text-stroke:0.6px #dadada;">SubScreen (GUI Tournament List Screen)</div>
<svg style="left:1964px;top:688px;" width="20" height="20" viewBox="0 0 20 20"><circle cx="10" cy="10" r="9" fill="none" stroke="#d0d0d0" stroke-width="2"/><rect x="8" y="8" width="4" height="4" fill="#d0d0d0"/></svg>
<div style="left:768px;top:734px;width:1234px;height:2px;background:#1a1a1a;"></div>
<div style="left:768px;top:736px;width:1234px;height:40px;background:#3e3e3e;"></div>
<div style="left:768px;top:776px;width:1234px;height:2px;background:#2f2f2f;"></div>
<svg style="left:780px;top:750px;" width="18" height="16" viewBox="0 0 18 16"><path d="M0 0 L18 0 L9 16 Z" fill="#6e6e6e"/></svg>
<svg style="left:812px;top:742px;" width="24" height="28" viewBox="0 0 24 28"><path d="M0 0 H19 L24 5 V28 H0 Z" fill="#ececec"/><path d="M8.5 6 V23 M13.5 6 V23" stroke="#1a6e1a" stroke-width="2.6"/><path d="M5 11 H19 M4 17 H18" stroke="#1a6e1a" stroke-width="2.6"/></svg>
<svg style="left:848px;top:742px;" width="28" height="28" viewBox="0 0 28 28"><rect x="0" y="0" width="28" height="28" rx="3" fill="#2a2a2a"/><rect x="2" y="0" width="24" height="2" fill="#101010"/><path d="M6.5 14.5 L11.5 19.5 L21.5 8.5" fill="none" stroke="#e6e6e6" stroke-width="3"/></svg>
<div class="t" style="left:888.00px;top:742.96px;font-size:25px;line-height:28.750px;color:#d2d2d2;font-weight:normal;letter-spacing:0.558px;-webkit-text-stroke:0.6px #d2d2d2;">GUI Tournament Hub Screen (Script)</div>
<svg style="left:1886px;top:746px;" width="20" height="20" viewBox="0 0 20 20"><circle cx="10" cy="10" r="10" fill="#c8c8c8"/><path d="M6.5 7.5 Q6.5 4 10 4 Q13.5 4 13.5 7 Q13.5 9 11 10.5 V12" fill="none" stroke="#555" stroke-width="2.4"/><rect x="9" y="14" width="4" height="3" fill="#555"/></svg>
<svg style="left:1926px;top:746px;" width="20" height="21" viewBox="0 0 20 21"><path d="M0 5 H10 M16 5 H20 M0 15 H4 M10 15 H20" stroke="#d0d0d0" stroke-width="2"/><rect x="12" y="0" width="4" height="10" fill="#d0d0d0"/><rect x="6" y="10" width="4" height="10" fill="#d0d0d0"/></svg>
<svg style="left:1974px;top:746px;" width="4" height="20" viewBox="0 0 4 20"><rect x="0" y="0" width="4" height="4" fill="#d0d0d0"/><rect x="0" y="8" width="4" height="4" fill="#d0d0d0"/><rect x="0" y="16" width="4" height="4" fill="#d0d0d0"/></svg>
<div class="t" style="left:806.00px;top:790.96px;font-size:25px;line-height:28.750px;color:#7c7c7c;font-weight:normal;letter-spacing:0.400px;">Script</div>
<div style="left:1284px;top:787px;width:709px;height:33px;background:#2e2e2e;border-radius:5px;box-shadow:inset 0 2px 0 #1e1e1e, inset 0 0 0 1px #222222;"></div>
<div style="left:1956px;top:789px;width:36px;height:30px;background:#333333;border-radius:0 5px 5px 0;"></div>
<svg style="left:1293px;top:796px;" width="17" height="20" viewBox="0 0 17 20"><path d="M0 0 H14 L17 3 V20 H0 Z" fill="#9c9c9c"/><path d="M7 4 V17 M10.5 4 V17" stroke="#2d6a2d" stroke-width="2"/><path d="M4.5 8 H13 M4 13 H12.5" stroke="#2d6a2d" stroke-width="2"/></svg>
<div class="t" style="left:1316.00px;top:789.96px;font-size:25px;line-height:28.750px;color:#7c7c7c;font-weight:normal;letter-spacing:0.143px;">GUITournamentHubScreen</div>
<svg style="left:1964px;top:794px;" width="20" height="20" viewBox="0 0 20 20"><circle cx="10" cy="10" r="9" fill="none" stroke="#8a8a8a" stroke-width="2"/><rect x="8" y="8" width="4" height="4" fill="#8a8a8a"/></svg>
<svg style="left:782px;top:836px;" width="16" height="18" viewBox="0 0 16 18"><path d="M0 0 L16 9 L0 18 Z" fill="#6e6e6e"/></svg>
<div class="t" style="left:806.00px;top:830.96px;font-size:25px;line-height:28.750px;color:#d2d2d2;font-weight:normal;letter-spacing:0.406px;-webkit-text-stroke:0.6px #d2d2d2;">Hub Gui Components</div>
<div style="left:1898px;top:826px;width:95px;height:35px;background:#2a2a2a;border-radius:5px;box-shadow:inset 0 2px 0 #111111, inset 0 0 0 1px #222222;"></div>
<div class="t" style="left:1904.00px;top:829.96px;font-size:25px;line-height:28.750px;color:#d2d2d2;font-weight:normal;letter-spacing:0.000px;">6</div>
<div class="t" style="left:805.00px;top:870.96px;font-size:25px;line-height:28.750px;color:#c4c4c4;font-weight:normal;letter-spacing:0.125px;">Loading Indicator</div>
<div style="left:1284px;top:867px;width:709px;height:34px;background:#2a2a2a;border-radius:5px;box-shadow:inset 0 2px 0 #111111, inset 0 0 0 1px #222222;"></div>
<div style="left:1956px;top:869px;width:36px;height:31px;background:#303030;border-radius:0 5px 5px 0;"></div>
<svg style="left:1292px;top:875px" width="19" height="20" viewBox="0 0 26 28"><path d="M13 0 L25 5.5 Q26 6 26 7 V21.5 L13 28 L0 21.5 V7 Q0 6 1 5.5 Z" fill="#74c5ec"/><path d="M13 0 L25 5.5 Q26 6 26 7 L13 13 L0 7 Q0 6 1 5.5 Z" fill="#86d4f5"/><path d="M26 7 L13 13 V28 L26 21.5 Z" fill="#68b8e0"/><path d="M3.5 8 L13 12.8 L22.5 8 M13 12.8 V28" fill="none" stroke="#2a2a2a" stroke-width="2"/></svg>
<div class="t" style="left:1315.00px;top:870.96px;font-size:25px;line-height:28.750px;color:#d2d2d2;font-weight:normal;letter-spacing:0.333px;">Loading</div>
<svg style="left:1964px;top:874px;" width="20" height="20" viewBox="0 0 20 20"><circle cx="10" cy="10" r="9" fill="none" stroke="#d0d0d0" stroke-width="2"/><rect x="8" y="8" width="4" height="4" fill="#d0d0d0"/></svg>
<svg style="left:782px;top:916px;" width="16" height="18" viewBox="0 0 16 18"><path d="M0 0 L16 9 L0 18 Z" fill="#6e6e6e"/></svg>
<div class="t" style="left:806.00px;top:910.96px;font-size:25px;line-height:28.750px;color:#d2d2d2;font-weight:normal;letter-spacing:0.470px;-webkit-text-stroke:0.6px #d2d2d2;">Disable While Loading</div>
<div style="left:1898px;top:907px;width:95px;height:34px;background:#2a2a2a;border-radius:5px;box-shadow:inset 0 2px 0 #111111, inset 0 0 0 1px #222222;"></div>
<div class="t" style="left:1904.00px;top:910.96px;font-size:25px;line-height:28.750px;color:#d2d2d2;font-weight:normal;letter-spacing:0.000px;">2</div>
<div style="left:768px;top:960px;width:1234px;height:2px;background:#1a1a1a;"></div>
<div style="left:1157px;top:980px;width:457px;height:44px;background:#585858;border-radius:4px;box-shadow:inset 0 -2px 0 #242424, inset 0 0 0 1px #2e2e2e;"></div>
<div class="t" style="left:1297.00px;top:986.96px;font-size:25px;line-height:28.750px;color:#d2d2d2;font-weight:normal;letter-spacing:-0.167px;">Add Component</div>
<svg style="left:0px;top:0px;pointer-events:none" width="2002" height="1076" viewBox="0 0 2002 1076"><path d="M392 332 H1484 Q1504 332 1504 352 V645" fill="none" stroke="#4a1abe" stroke-width="4"/><path d="M1488.5 640.5 L1519.5 640.5 L1504 667 Z" fill="#4a1abe" stroke="#ffffff" stroke-width="4.5" stroke-linejoin="miter"/><path d="M1504 630 V644" stroke="#4a1abe" stroke-width="4"/><circle cx="392" cy="332" r="12" fill="#4a1abe" stroke="#ffffff" stroke-width="4.2"/></svg>
</body></html>
